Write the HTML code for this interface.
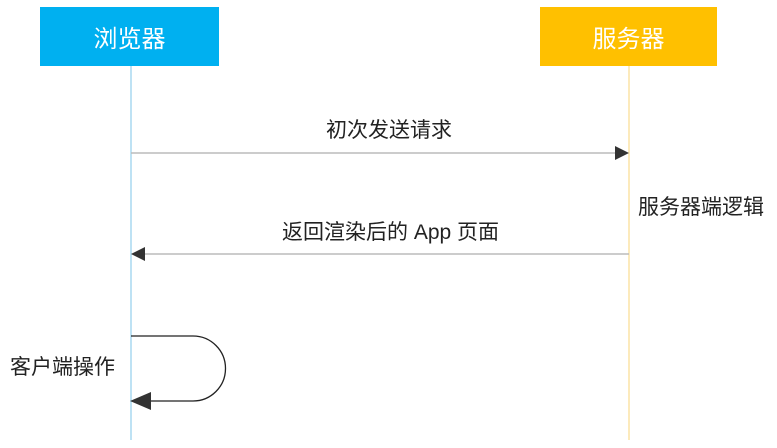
<!DOCTYPE html>
<html><head><meta charset="utf-8"><style>
html,body{margin:0;padding:0;background:#fff;}
body{width:777px;height:448px;position:relative;overflow:hidden;font-family:"Liberation Sans","Noto Sans CJK SC",sans-serif;}
.box{position:absolute;top:7px;height:59px;color:#fff;font-size:24px;display:flex;align-items:center;justify-content:center;}
.t{position:absolute;color:#222;font-size:21px;white-space:nowrap;line-height:1;}
svg{position:absolute;left:0;top:0;}
</style></head><body>
<svg width="777" height="448">
<line x1="131" y1="66" x2="131" y2="440" stroke="#a8d8f0" stroke-width="1.5"/>
<line x1="629" y1="66" x2="629" y2="440" stroke="#fbe3a6" stroke-width="1.5"/>
<line x1="131" y1="153" x2="616" y2="153" stroke="#bbb" stroke-width="1.5"/>
<polygon points="629,153 615,146 615,160" fill="#333"/>
<line x1="144" y1="254" x2="629" y2="254" stroke="#bbb" stroke-width="1.5"/>
<polygon points="131,254 145,247 145,261" fill="#333"/>
<path d="M131,336 H193 A32.5,32.5 0 0 1 193,401 H148" fill="none" stroke="#222" stroke-width="1.3"/>
<polygon points="130,401 151,392 151,410" fill="#333"/>
</svg>
<div class="box" style="left:40px;width:179px;background:#00b0f0;">浏览器</div>
<div class="box" style="left:540px;width:177px;background:#ffc000;">服务器</div>
<div class="t" style="left:326px;top:120px;">初次发送请求</div>
<div class="t" style="left:638px;top:197px;">服务器端逻辑</div>
<div class="t" style="left:282px;top:222px;">返回渲染后的 App 页面</div>
<div class="t" style="left:10px;top:357px;">客户端操作</div>
</body></html>
